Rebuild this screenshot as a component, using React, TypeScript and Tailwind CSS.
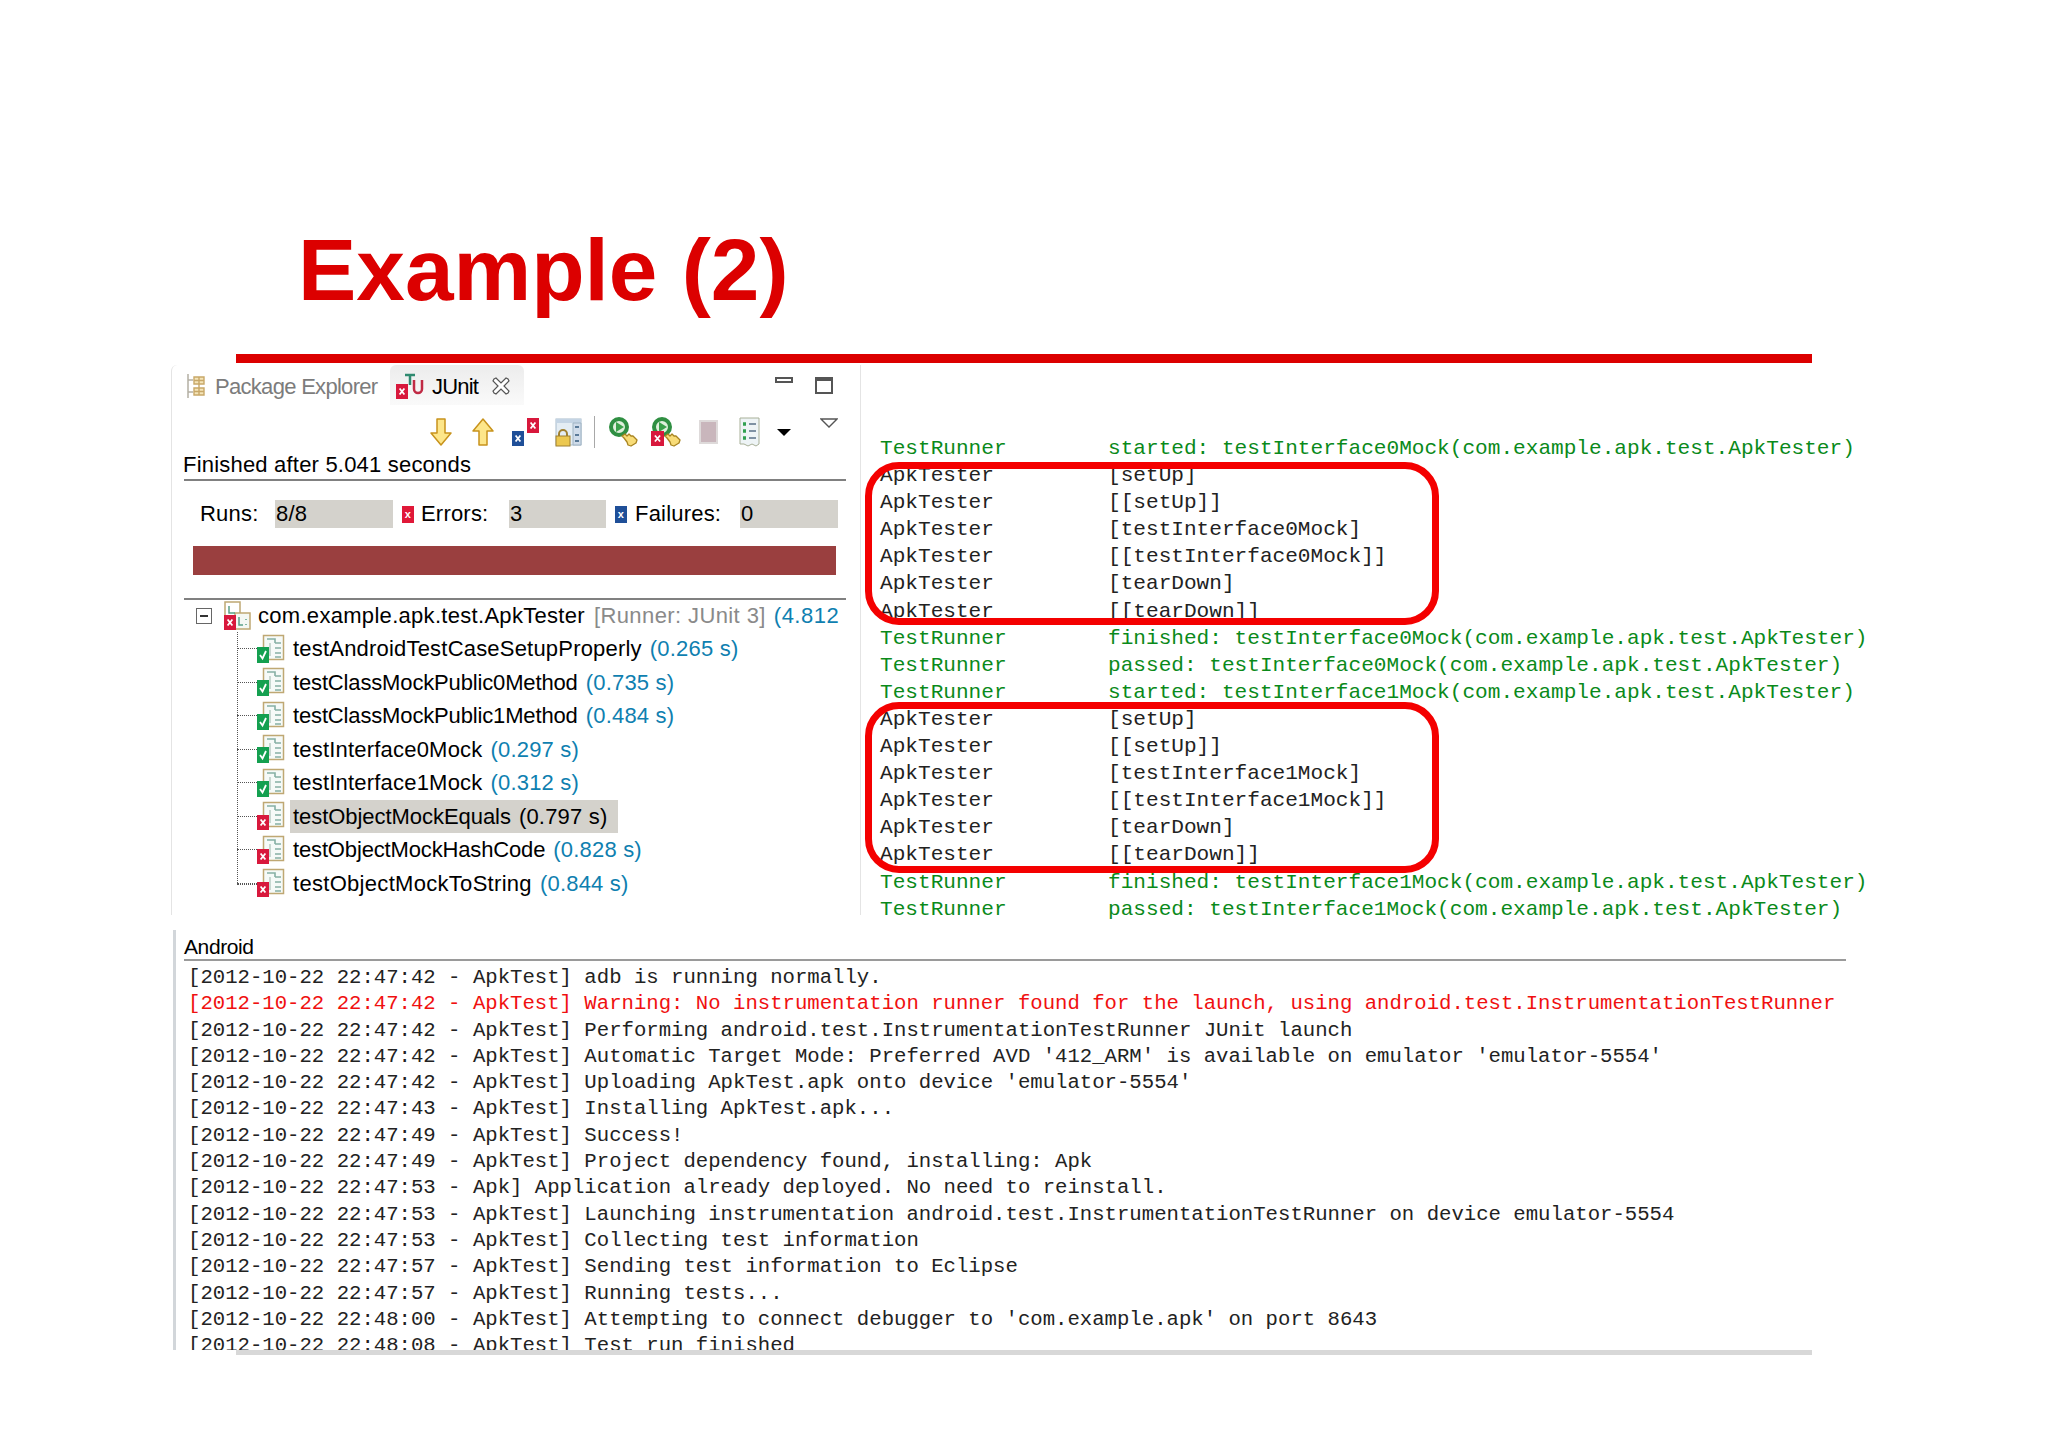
const mono = "font-['Liberation_Mono',monospace]";

const runnerLines = [
  ["TestRunner", "started: testInterface0Mock(com.example.apk.test.ApkTester)"],
  ["ApkTester", "[setUp]"],
  ["ApkTester", "[[setUp]]"],
  ["ApkTester", "[testInterface0Mock]"],
  ["ApkTester", "[[testInterface0Mock]]"],
  ["ApkTester", "[tearDown]"],
  ["ApkTester", "[[tearDown]]"],
  ["TestRunner", "finished: testInterface0Mock(com.example.apk.test.ApkTester)"],
  ["TestRunner", "passed: testInterface0Mock(com.example.apk.test.ApkTester)"],
  ["TestRunner", "started: testInterface1Mock(com.example.apk.test.ApkTester)"],
  ["ApkTester", "[setUp]"],
  ["ApkTester", "[[setUp]]"],
  ["ApkTester", "[testInterface1Mock]"],
  ["ApkTester", "[[testInterface1Mock]]"],
  ["ApkTester", "[tearDown]"],
  ["ApkTester", "[[tearDown]]"],
  ["TestRunner", "finished: testInterface1Mock(com.example.apk.test.ApkTester)"],
  ["TestRunner", "passed: testInterface1Mock(com.example.apk.test.ApkTester)"],
];

const logLines = [
  "[2012-10-22 22:47:42 - ApkTest] adb is running normally.",
  "[2012-10-22 22:47:42 - ApkTest] Warning: No instrumentation runner found for the launch, using android.test.InstrumentationTestRunner",
  "[2012-10-22 22:47:42 - ApkTest] Performing android.test.InstrumentationTestRunner JUnit launch",
  "[2012-10-22 22:47:42 - ApkTest] Automatic Target Mode: Preferred AVD '412_ARM' is available on emulator 'emulator-5554'",
  "[2012-10-22 22:47:42 - ApkTest] Uploading ApkTest.apk onto device 'emulator-5554'",
  "[2012-10-22 22:47:43 - ApkTest] Installing ApkTest.apk...",
  "[2012-10-22 22:47:49 - ApkTest] Success!",
  "[2012-10-22 22:47:49 - ApkTest] Project dependency found, installing: Apk",
  "[2012-10-22 22:47:53 - Apk] Application already deployed. No need to reinstall.",
  "[2012-10-22 22:47:53 - ApkTest] Launching instrumentation android.test.InstrumentationTestRunner on device emulator-5554",
  "[2012-10-22 22:47:53 - ApkTest] Collecting test information",
  "[2012-10-22 22:47:57 - ApkTest] Sending test information to Eclipse",
  "[2012-10-22 22:47:57 - ApkTest] Running tests...",
  "[2012-10-22 22:48:00 - ApkTest] Attempting to connect debugger to 'com.example.apk' on port 8643",
  "[2012-10-22 22:48:08 - ApkTest] Test run finished",
];

const tests = [
  { name: "testAndroidTestCaseSetupProperly", time: "(0.265 s)", ok: true, track: "tracking-[0.2px]" },
  { name: "testClassMockPublic0Method", time: "(0.735 s)", ok: true, track: "tracking-[-0.15px]" },
  { name: "testClassMockPublic1Method", time: "(0.484 s)", ok: true, track: "tracking-[-0.15px]" },
  { name: "testInterface0Mock", time: "(0.297 s)", ok: true, track: "tracking-[0.2px]" },
  { name: "testInterface1Mock", time: "(0.312 s)", ok: true, track: "tracking-[0.2px]" },
  { name: "testObjectMockEquals", time: "(0.797 s)", ok: false, selected: true, track: "tracking-[-0.05px]" },
  { name: "testObjectMockHashCode", time: "(0.828 s)", ok: false, track: "tracking-[-0.15px]" },
  { name: "testObjectMockToString", time: "(0.844 s)", ok: false, track: "tracking-[0.3px]" },
];

function XBadge({ x, y, w = 12, h = 14, color = "#d8183c" }: { x: number; y: number; w?: number; h?: number; color?: string }) {
  return (
    <g>
      <rect x={x} y={y} width={w} height={h} fill={color} />
      <path d={`M${x + w * 0.3} ${y + h * 0.3}L${x + w * 0.7} ${y + h * 0.7}M${x + w * 0.7} ${y + h * 0.3}L${x + w * 0.3} ${y + h * 0.7}`} stroke="#fff" strokeWidth="1.8" />
    </g>
  );
}

function TestIcon({ ok }: { ok: boolean }) {
  return (
    <svg width="28" height="30" viewBox="0 0 28 30" className="shrink-0">
      <rect x="6.5" y="1.5" width="20" height="24" fill="#f6faf8" stroke="#bfa873" strokeWidth="1.5" />
      <path d="M10 5h8v4M18 9h6M18 14h6M18 19h6M18 23h6" stroke="#86b0a4" strokeWidth="1.6" fill="none" />
      <path d="M13 9v13" stroke="#b8ccc4" strokeWidth="1.5" />
      {ok ? (
        <g>
          <rect x="0" y="13" width="12" height="16" fill="#14a050" />
          <path d="M3 21l2.500 3.500L9 17" stroke="#fff" strokeWidth="1.800" fill="none" />
        </g>
      ) : (
        <XBadge x={0} y={14} h={15} />
      )}
    </svg>
  );
}

function ArrowIcon({ up }: { up?: boolean }) {
  return (
    <svg width="22" height="30" viewBox="0 0 22 30">
      <path
        d={up ? "M11 2L21 14H15V28H7V14H1Z" : "M11 28L21 16H15V2H7V16H1Z"}
        fill="#fde68a"
        stroke="#c8931c"
        strokeWidth="1.500"
        strokeLinejoin="round"
      />
    </svg>
  );
}

function HandPointer() {
  return (
    <path
      d="M14 19l3-2 2 2 2-2 2 2h2l4 4-1 3-5 3-3-1-1-3-3-4z"
      fill="#f8dc78"
      stroke="#a88420"
      strokeWidth="1.300"
      strokeLinejoin="round"
    />
  );
}

function RerunIcon({ fail }: { fail?: boolean }) {
  return (
    <svg width="30" height="30" viewBox="0 0 30 30">
      <circle cx="11" cy="10" r="8" fill="#dff0dc" stroke="#2f8f42" strokeWidth="4" />
      <path d="M8 5l8 5-8 5z" fill="#3aa04a" />
      {fail && <XBadge x={0} y={14} w={13} h={15} />}
      <HandPointer />
    </svg>
  );
}

export default function App() {
  return (
    <div className="w-[2048px] h-[1447px] overflow-hidden bg-white font-['Liberation_Sans',sans-serif] text-black relative">
      {/* Titre */}
      <div className="pl-[298px] pt-[220px] h-[354px]">
        <h1 className="text-[87.4px] leading-[100px] font-bold text-[#dc0000]">Example (2)</h1>
      </div>
      <div className="ml-[236px] w-[1576px] h-[9px] bg-[#dc0000]" />

      {/* Haut: JUnit + logcat */}
      <div className="flex h-[567px]">
        <div className="ml-[171px] w-[690px] h-[550px] mt-[2px] border-x border-[#e4e4e4] rounded-tl-[6px] text-[22px] tracking-[0.2px] shrink-0">
          {/* Onglets */}
          <div className="flex items-start h-[40px]">
            <div className="flex items-center h-[40px] pt-[2px] pl-[15px] w-[218px] text-[#7c7c7c]">
              <svg width="18" height="26" viewBox="0 0 18 26">
                <path d="M1 1v24M1 7h5M1 19h5" stroke="#b4b0a4" strokeWidth="1.500" fill="none" />
                <path d="M7 4h10v7H7zM7 15h10v7H7zM12 4v18M7 7.500h10M7 18.500h10" stroke="#c8a868" strokeWidth="1.400" fill="#f4e4b8" />
              </svg>
              <span className="ml-[10px] tracking-[-0.7px]">Package Explorer</span>
            </div>
            <div className="flex items-center w-[134px] h-[40px] pl-[6px] pt-[2px] rounded-t-[6px] bg-gradient-to-b from-[#ececec] to-[#fafafa]">
              <svg width="30" height="28" viewBox="0 0 30 28" className="shrink-0">
                <path d="M9 3h10M14 3v10" stroke="#2f8a70" strokeWidth="2.500" />
                <path d="M18 8v9a4 4 0 0 0 8 0V8" stroke="#c02a44" strokeWidth="2.500" fill="none" />
                <XBadge x={0} y={12} h={15} />
              </svg>
              <span className="ml-[6px] tracking-[-0.8px]">JUnit</span>
              <svg width="20" height="20" viewBox="0 0 20 20" className="ml-[13px]">
                <path d="M3 3l2-1 5 5 5-5 2 1 1 2-5 5 5 5-1 2-2 1-5-5-5 5-2-1-1-2 5-5-5-5z" fill="#fff" stroke="#555" strokeWidth="1.200" />
              </svg>
            </div>
            <div className="flex items-start pt-[12px] pl-[251px] gap-[22px]">
              <div className="w-[18px] h-[6px] border-2 border-[#555] bg-white" />
              <div className="w-[18px] h-[17px] border-2 border-t-[4px] border-[#555] bg-white" />
            </div>
          </div>

          {/* Barre d'outils */}
          <div className="flex items-center h-[36px] mt-[9px] pl-[258px] relative">
            <ArrowIcon />
            <span className="w-[20px]" />
            <ArrowIcon up />
            <span className="w-[18px]" />
            <svg width="28" height="28" viewBox="0 0 28 28">
              <XBadge x={0} y={13} h={15} color="#1f4f98" />
              <XBadge x={15} y={0} h={15} />
            </svg>
            <span className="w-[15px]" />
            <svg width="27" height="30" viewBox="0 0 27 30">
              <rect x="1" y="2" width="25" height="26" fill="#e4edf4" stroke="#a8bccc" />
              <rect x="1" y="2" width="25" height="4" fill="#c4d4e4" />
              <path d="M18 6h8v22h-8z" fill="#d0dcea" stroke="#a0b4c4" />
              <path d="M20 10h4M20 18h4M20 24h4" stroke="#5a7a98" strokeWidth="2" />
              <path d="M4 20v-3a4 4 0 0 1 8 0v3" stroke="#a08030" strokeWidth="2" fill="none" />
              <rect x="1" y="19" width="14" height="10" fill="#ecc850" stroke="#a08030" />
            </svg>
            <span className="w-[12px]" />
            <div className="w-px h-[32px] bg-[#a8a8a8]" />
            <span className="w-[13px]" />
            <RerunIcon />
            <span className="w-[13px]" />
            <RerunIcon fail />
            <span className="w-[18px]" />
            <div className="w-[19px] h-[24px] bg-[#c9b6bc] border-2 border-[#dedada]" />
            <span className="w-[21px]" />
            <svg width="21" height="30" viewBox="0 0 21 30">
              <path d="M1 1h19v26l-3 2-4-2-4 2-4-2-4 0z" fill="#eef4f6" stroke="#a8b098" />
              <path d="M4 7h3M4 14h3M4 21h3" stroke="#30a050" strokeWidth="3.500" />
              <path d="M10 7h7M10 14h7M10 21h7" stroke="#5a7088" strokeWidth="1.500" />
            </svg>
            <span className="w-[17px]" />
            <div className="w-0 h-0 border-x-[7px] border-x-transparent border-t-[7px] border-t-black" />
            <span className="w-[29px]" />
            <svg width="18" height="10" viewBox="0 0 18 10" className="-mt-[18px]">
              <path d="M1 1h16L9 9z" fill="#fff" stroke="#555" strokeWidth="1.300" />
            </svg>
          </div>

          {/* Résumé */}
          <div className="pl-[11px] h-[29px] leading-[30px]">Finished after 5.041 seconds</div>
          <div className="ml-[12px] w-[662px] h-[2px] bg-[#808080]" />
          <div className="flex items-center h-[28px] mt-[19px] leading-[28px]">
            <span className="ml-[28px] w-[75px]">Runs:</span>
            <div className="w-[118px] h-[28px] bg-[#d4d2cc] pl-[1px]">8/8</div>
            <div className="ml-[9px] w-[12px] h-[17px] bg-[#e01838] text-white text-[11px] leading-[17px] text-center font-bold">x</div>
            <span className="ml-[7px] w-[88px]">Errors:</span>
            <div className="w-[97px] h-[28px] bg-[#d4d2cc] pl-[1px]">3</div>
            <div className="ml-[9px] w-[12px] h-[17px] bg-[#1f4f98] text-white text-[11px] leading-[17px] text-center font-bold">x</div>
            <span className="ml-[8px] w-[105px]">Failures:</span>
            <div className="w-[98px] h-[28px] bg-[#d4d2cc] pl-[1px]">0</div>
          </div>
          <div className="ml-[21px] w-[643px] h-[29px] mt-[18px] bg-[#9a3f3f]" />
          <div className="ml-[12px] w-[662px] h-[2px] mt-[23px] bg-[#808080]" />

          {/* Arbre */}
          <div className="flex items-center h-[31px] pl-[24px] whitespace-nowrap overflow-hidden">
            <div className="w-[16px] h-[16px] border border-[#666] flex items-center justify-center shrink-0">
              <div className="w-[8px] h-[2px] bg-[#333]" />
            </div>
            <svg width="27" height="30" viewBox="0 0 27 30" className="ml-[12px] shrink-0">
              <rect x="1" y="1" width="15" height="22" fill="#fff" stroke="#bfa873" strokeWidth="1.500" />
              <rect x="11" y="12" width="15" height="16" fill="#f4f8f4" stroke="#bfa873" strokeWidth="1.500" />
              <path d="M5 5v7h6M15 16v8h4M22 18v1M22 23v1" stroke="#5aa088" strokeWidth="1.500" fill="none" />
              <XBadge x={0} y={14} h={15} />
            </svg>
            <span className="ml-[7px] tracking-[0.3px]">com.example.apk.test.ApkTester</span>
            <span className="ml-[9px] text-[#8a8a8a] tracking-[0.4px]">[Runner: JUnit 3]</span>
            <span className="ml-[8px] text-[#0f7fb0] tracking-[0.5px]">(4.812</span>
          </div>
          <div className="relative pl-[85px] mt-[1px]">
            <div className="absolute left-[65px] top-0 h-[253px] w-[20px] border-l border-b border-dotted border-[#555]" />
            {tests.map((t, index) => (
              <div key={index} className="flex items-center h-[33.5px] whitespace-nowrap relative">
                <div className="absolute left-[-20px] top-[16px] w-[20px] border-t border-dotted border-[#555]" />
                <TestIcon ok={t.ok} />
                <div className={`flex items-center ml-[5px] px-[3px] h-[33.5px] ${t.selected ? "bg-[#d4d2cc] w-[328px]" : ""}`}>
                  <span className={t.track}>{t.name}</span>
                  <span className={`ml-[8px] ${t.selected ? "text-black" : "text-[#0f7fb0]"}`}>{t.time}</span>
                </div>
              </div>
            ))}
          </div>
        </div>

        {/* Sortie TestRunner */}
        <div className={`pt-[72px] pl-[19px] text-[21.1px] ${mono}`}>
          {runnerLines.map((line, index) => (
            <div key={index} className={`flex h-[27.1px] leading-[27.1px] whitespace-nowrap ${line[0] === "TestRunner" ? "text-[#0a8a1a]" : "text-[#222]"}`}>
              <span className="w-[228px]">{line[0]}</span>
              <span>{line[1]}</span>
            </div>
          ))}
        </div>
      </div>

      {/* Cadres rouges */}
      <div className="absolute left-[865px] top-[462px] w-[574px] h-[163px] border-[7px] border-[#f40000] rounded-[34px]" />
      <div className="absolute left-[865px] top-[702px] w-[574px] h-[171px] border-[7px] border-[#f40000] rounded-[34px]" />

      {/* Console Android */}
      <div className="ml-[173px] w-[1690px] h-[420px] border-l-[3px] border-[#d2d6da] overflow-hidden pl-[8px]">
        <div className="h-[29px] leading-[34px] text-[21px] tracking-[-0.4px]">Android</div>
        <div className="w-[1662px] h-[2px] bg-[#9a9a9a]" />
        <div className={`text-[20.65px] pl-[4px] pt-[4px] ${mono}`}>
          {logLines.map((line, index) => (
            <div key={index} className={`h-[26.3px] leading-[26.3px] whitespace-nowrap ${index === 1 ? "text-[#f01010]" : "text-[#222]"}`}>
              {line}
            </div>
          ))}
        </div>
      </div>
      <div className="ml-[236px] w-[1576px] h-[5px] bg-[#d8d8d8]" />
    </div>
  );
}
